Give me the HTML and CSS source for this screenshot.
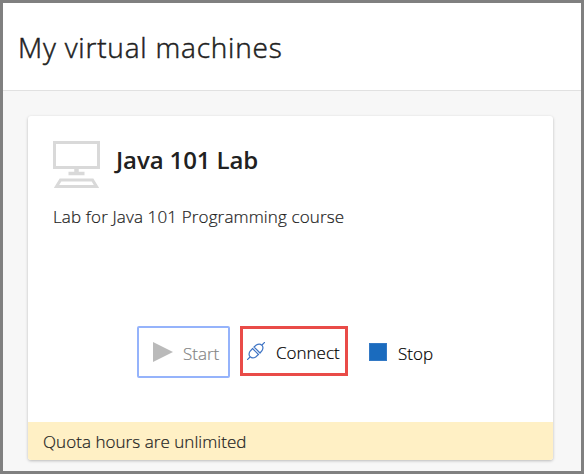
FILE: index.html
```html
<!DOCTYPE html>
<html lang="en">
<head>
<meta charset="utf-8">
<title>My virtual machines</title>
<link rel="stylesheet" href="styles.css">
</head>
<body>
<header class="header"><h1 class="title">My virtual machines</h1></header>
<main class="content">
  <article class="card">
    <div class="card-head">
      <svg class="computer" width="48" height="48" viewBox="0 0 48 48" fill="none" stroke="#d9d9d9">
        <rect x="1.500" y="1.500" width="44" height="25" stroke-width="3"/>
        <path d="M15.500 32.500H31.500" stroke-width="3.500"/>
        <path d="M23.500 28V33" stroke-width="4.500"/>
        <path d="M7.500 39H39.500L43.500 45.500H3.500Z" stroke-width="3"/>
      </svg>
      <h2 class="name">Java 101 Lab</h2>
    </div>
    <p class="description">Lab for Java 101 Programming course</p>
    <div class="actions">
      <button class="action start" disabled>
        <svg width="20" height="20" viewBox="0 0 20 20"><path d="M0 0L20 10L0 20Z" fill="#bababa"/></svg>
        <span class="label">Start</span>
      </button>
      <button class="action connect">
        <svg width="18" height="18" viewBox="0 0 18 18" fill="none" stroke="#3f74c4" stroke-width="1.200">
          <path d="M0 18L3 15M15 3L18 0"/>
          <path d="M5.500 6.500L11.500 12.500L8.700 15Q5.500 17 3.200 14.800Q1 12.500 3 9.300Z"/>
          <path d="M7 5L13 11L15 8.700Q17 5.500 14.800 3.200Q12.500 1 9.300 3Z"/>
        </svg>
        <span class="label">Connect</span>
      </button>
      <button class="action stop">
        <svg width="18" height="18" viewBox="0 0 18 18"><rect x=".5" y=".5" width="17" height="17" fill="#1a6bbe" stroke="#3379c5"/></svg>
        <span class="label">Stop</span>
      </button>
    </div>
    <footer class="quota"><span>Quota hours are unlimited</span></footer>
  </article>
</main>
</body>
</html>
```
FILE: styles.css
```css
* { box-sizing: border-box; }
body {
  margin: 0;
  height: 474px;
  border: 3px solid #808080;
  background: #f7f7f7;
  color: #212121;
  font: 300 17px/24px "Open Sans", "Noto Sans", sans-serif;
  -webkit-text-stroke: .2px;
  overflow: hidden;
}
h1, h2, p { margin: 0; white-space: nowrap; }
.header {
  height: 88px;
  padding: 24px 15px 0;
  background: #fff;
  border-bottom: 1px solid #e1e1e1;
}
.title { font-size: 28px; line-height: 40px; font-weight: 300; letter-spacing: .8px; -webkit-text-stroke: .5px; }
.content { padding: 25px 28px 0 25px; }
.card {
  display: flex;
  flex-direction: column;
  height: 344px;
  background: #fff;
  border-radius: 3px;
  box-shadow: 0 1px 3px rgba(0, 0, 0, .25);
  overflow: hidden;
}
.card-head { display: flex; gap: 15px; padding: 25px 0 0 25px; height: 73px; }
.computer { flex: none; }
.name { font-size: 24px; line-height: 38px; font-weight: 600; letter-spacing: -.1px; -webkit-text-stroke: 0; }
.description { margin: 16px 0 0 25px; letter-spacing: .14px; }
.actions { display: flex; margin: 97px 0 0 109px; height: 52px; }
.action {
  display: flex;
  align-items: center;
  padding: 0;
  border: 0;
  background: none;
  color: #000;
  font: inherit;
  white-space: nowrap;
}
.label { padding-top: 3px; }
.start { width: 93px; padding-left: 14px; gap: 10px; border: 2px solid #95b3fb; border-radius: 2px; color: #858585; }
.connect { width: 108px; height: 50px; margin-left: 10px; padding-left: 4px; gap: 11px; border: 3px solid #e94b48; }
.stop { margin-left: 21px; gap: 11px; }
.quota { margin-top: auto; height: 38px; padding: 8px 15px; background: #fff0c5; letter-spacing: .05px; }
```
